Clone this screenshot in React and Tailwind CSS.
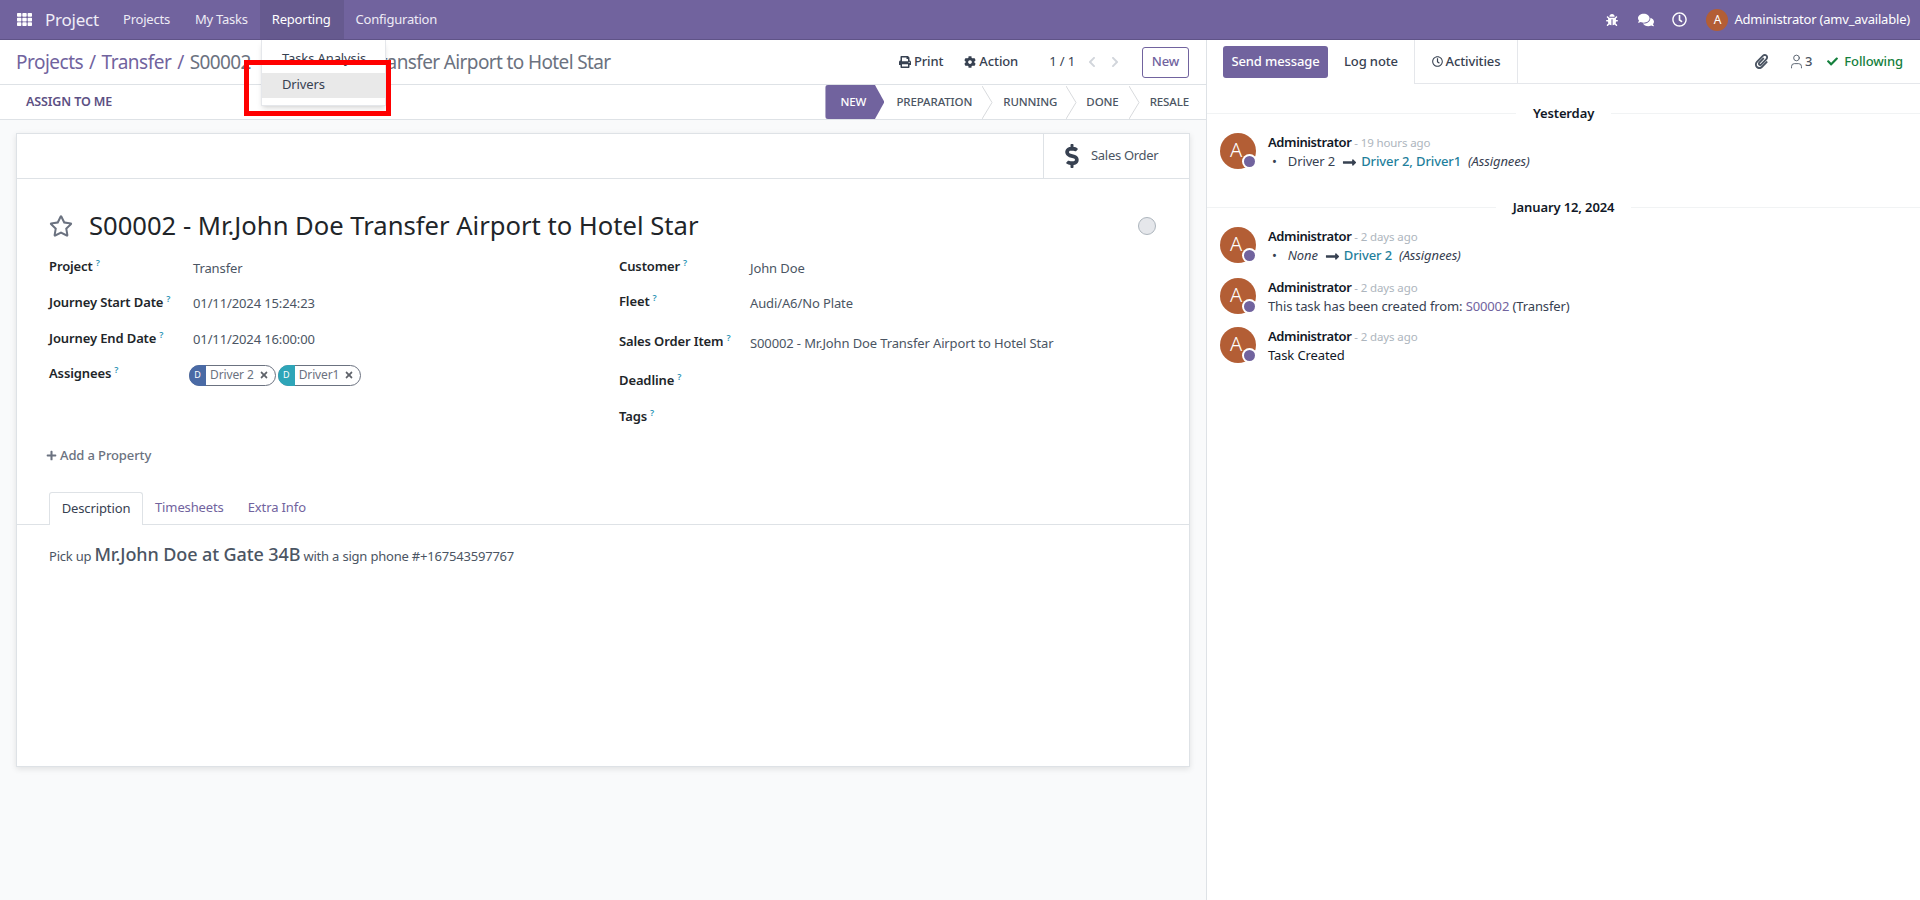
import {
  FaBug,
  FaCheck,
  FaChevronLeft,
  FaChevronRight,
  FaCog,
  FaComments,
  FaDollarSign,
  FaLongArrowAltRight,
  FaPaperclip,
  FaPlus,
  FaPrint,
  FaRegClock,
  FaRegStar,
  FaTh,
  FaTimes,
} from "react-icons/fa";
import { User } from "lucide-react";

const Help = () => (
  <sup className="ml-[3px] text-[9px] font-semibold text-[#2a93b5] -top-[5px]">?</sup>
);

const Field = ({ label, value, height, valueWidth, children }) => (
  <div className={`flex items-center ${height}`}>
    <div className={`${valueWidth} shrink-0 font-semibold text-[#212529] -mt-[3px]`}>
      {label}
      <Help />
    </div>
    <div className="text-[#4b5563]">{value}{children}</div>
  </div>
);

const Chip = ({ name, color }) => (
  <span className="flex h-[21px] items-center rounded-full border border-[#6b7280] pr-[6px] text-[12px] text-[#6b7280]">
    <span className={`${color} -ml-px mr-[4px] flex h-[21px] w-[17px] items-center justify-center rounded-l-full text-[9px] text-white`}>
      D
    </span>
    {name}
    <FaTimes className="ml-[5px] text-[10px] text-[#5f636a]" />
  </span>
);

const StatusArrow = () => (
  <svg width="11" height="33" viewBox="0 0 11 33" className="shrink-0 text-[#d8dadd]">
    <path d="M0 0 L10 16.5 L0 33" fill="none" stroke="currentColor" />
  </svg>
);

const Avatar = () => (
  <div className="relative flex size-[36px] shrink-0 items-center justify-center rounded-full bg-[#b35e35] text-[20px] font-light text-white">
    <span className="-mt-[2px] -ml-[4px]">A</span>
    <span className="absolute -right-[1px] bottom-[0px] flex size-[15px] items-center justify-center rounded-full bg-white">
      <span className="size-[11px] rounded-full bg-[#71639e]" />
    </span>
  </div>
);

const Message = ({ ago, className, children }) => (
  <div className={`flex gap-[12px] pl-[13px] ${className}`}>
    <Avatar />
    <div className="leading-[19px]">
      <div>
        <span className="font-semibold tracking-[-0.4px] text-[#111827]">Administrator</span>
        <span className="text-[11.5px] text-[#adb5bd]"> - {ago}</span>
      </div>
      <div>{children}</div>
    </div>
  </div>
);

const DateLine = ({ label, className }) => (
  <div className={`flex items-center gap-[17px] ${className}`}>
    <div className="h-px flex-1 bg-[#f1f3f4]" />
    <span className="font-semibold text-[#111827]">{label}</span>
    <div className="h-px flex-1 bg-[#f1f3f4]" />
  </div>
);

const App = () => {
  return (
    <div className="relative h-screen overflow-hidden bg-white text-[13px] tracking-[-0.12px] text-[#374151] font-['Noto_Sans',sans-serif]">
      {/* Navbar */}
      <header className="flex h-[40px] items-center justify-between border-b border-[#5f5387] bg-[#71639e] text-white">
        <div className="flex h-full items-center tracking-[-0.22px]">
          <FaTh className="ml-[17px] mr-[13px] text-[15px]" />
          <span className="mr-[13px] text-[17px] text-[#f0edf7]">Project</span>
          <span className="pl-[11px] pr-[13px] text-[#eeebf5]">Projects</span>
          <span className="px-[12px] text-[#eeebf5]">My Tasks</span>
          <span className="flex h-full items-center bg-[#665a8f] pl-[12px] pr-[13px]">Reporting</span>
          <span className="px-[12px] text-[#eeebf5]">Configuration</span>
        </div>
        <div className="flex h-full items-center pr-[10px]">
          <FaBug className="mr-[20px] text-[12px]" />
          <FaComments className="mr-[18px] text-[16px]" />
          <FaRegClock className="mr-[19px] text-[15px]" />
          <span className="mr-[6px] flex size-[22px] items-center justify-center rounded-full bg-[#b35e35] text-[12px]">A</span>
          <span className="tracking-[-0.2px]">Administrator (amv_available)</span>
        </div>
      </header>

      <div className="flex h-[860px]">
        {/* Main column */}
        <main className="w-[1206px] shrink-0 bg-[#f9fafb]">
          <div className="bg-white">
            <div className="flex h-[45px] items-center justify-between border-b border-[#dee2e6] pl-[16px] pr-[17px]">
              <div className="text-[19px] tracking-[-0.5px]">
                <span className="text-[#71639e]">Projects<span className="mx-[1.5px]"> / </span>Transfer<span className="mx-[1.5px]"> / </span></span>
                <span className="tracking-[-0.62px] text-[#6b7280]">S00002 - Mr.John Doe Transfer Airport to Hotel Star</span>
              </div>
              <div className="flex items-center">
                <span className="flex items-center gap-[3px] font-medium text-[#374151]"><FaPrint className="text-[12px]" /> Print</span>
                <span className="ml-[21px] flex items-center gap-[3px] font-medium text-[#374151]"><FaCog className="text-[12px]" /> Action</span>
                <span className="ml-[31px] text-[#374151]">1 / 1</span>
                <FaChevronLeft className="ml-[11px] text-[12px] text-[#d1d5db]" />
                <FaChevronRight className="ml-[11px] text-[12px] text-[#d1d5db]" />
                <span className="ml-[21px] flex h-[31px] w-[47px] items-center justify-center rounded-[3px] border border-[#71639e] font-medium text-[#71639e]">New</span>
              </div>
            </div>
            <div className="flex h-[35px] items-center justify-between border-b border-[#dee2e6] pl-[26px] pr-[17px]">
              <span className="pt-px text-[12.5px] font-semibold text-[#5c5083]">ASSIGN TO ME</span>
              <div className="flex h-full items-center text-[11.5px] font-medium text-[#4b5563]">
                <span className="flex h-full w-[59px] items-center rounded-l-[3px] bg-[#71639e] pl-[15px] text-white [clip-path:polygon(0_0,84%_0,100%_50%,84%_100%,0_100%)]">NEW</span>
                <span className="ml-[12px] mr-[10px]">PREPARATION</span>
                <StatusArrow />
                <span className="ml-[10px] mr-[9px]">RUNNING</span>
                <StatusArrow />
                <span className="ml-[9px] mr-[10px]">DONE</span>
                <StatusArrow />
                <span className="ml-[10px]">RESALE</span>
              </div>
            </div>
          </div>

          {/* Form sheet */}
          <div className="ml-[16px] mt-[13px] h-[634px] w-[1174px] border border-[#dee2e6] bg-white shadow-[0_2px_6px_rgba(0,0,0,0.1)]">
            <div className="flex h-[45px] justify-end border-b border-[#dee2e6]">
              <div className="flex w-[146px] items-center gap-[7px] border-l border-[#dee2e6] pl-[16px] tracking-[-0.3px] text-[#4b5563]">
                <FaDollarSign className="text-[24px] text-[#374151]" />
                <span>Sales Order</span>
              </div>
            </div>

            <div className="flex h-[72px] items-center justify-between pl-[32px] pr-[33px] pt-[22px]">
              <div className="flex items-center">
                <FaRegStar className="text-[24px] text-[#6b7280]" />
                <h1 className="ml-[16px] text-[25.6px] tracking-normal text-[#212529]">S00002 - Mr.John Doe Transfer Airport to Hotel Star</h1>
              </div>
              <span className="size-[18px] rounded-full border border-[#adb5bd] bg-[#e5e7eb]" />
            </div>

            <div className="flex pl-[32px]">
              <div className="w-[570px]">
                <Field label="Project" value="Transfer" height="h-[35px]" valueWidth="w-[144px]" />
                <Field label="Journey Start Date" value="01/11/2024 15:24:23" height="h-[36px]" valueWidth="w-[144px]" />
                <Field label="Journey End Date" value="01/11/2024 16:00:00" height="h-[36px]" valueWidth="w-[144px]" />
                <Field label="Assignees" height="h-[35px]" valueWidth="w-[140px]">
                  <div className="-mt-px flex gap-[2px]">
                    <Chip name="Driver 2" color="bg-[#4a6aa5]" />
                    <Chip name="Driver1" color="bg-[#2ea5b8]" />
                  </div>
                </Field>
              </div>
              <div>
                <Field label="Customer" value="John Doe" height="h-[35px]" valueWidth="w-[131px]" />
                <Field label="Fleet" value="Audi/A6/No Plate" height="h-[35px]" valueWidth="w-[131px]" />
                <Field label="Sales Order Item" value="S00002 - Mr.John Doe Transfer Airport to Hotel Star" height="h-[45px]" valueWidth="w-[131px]" />
                <Field label="Deadline" height="h-[33px]" valueWidth="w-[131px]" />
                <Field label="Tags" height="h-[38px]" valueWidth="w-[131px]" />
              </div>
            </div>

            <div className="ml-[29px] mt-[9px] flex items-center gap-[3px] font-medium text-[#6b7280]">
              <FaPlus className="text-[11px]" /> Add a Property
            </div>

            <div className="mt-[26px] flex h-[33px] items-end border-b border-[#dee2e6] pl-[32px]">
              <span className="-mb-px flex h-[33px] w-[94px] items-center justify-center rounded-t-[3px] border border-b-0 border-[#dee2e6] bg-white text-[#374151]">Description</span>
              <span className="flex h-[33px] items-center px-[12px] pt-[2px] text-[#71639e]">Timesheets</span>
              <span className="flex h-[33px] items-center px-[12px] pt-[2px] text-[#71639e]">Extra Info</span>
            </div>

            <div className="flex items-baseline gap-[3px] pl-[32px] pt-[16px] tracking-[-0.2px] text-[#4b5563]">
              Pick up <span className="text-[18px] font-medium tracking-[-0.1px]">Mr.John Doe at Gate 34B</span> with a sign phone #+167543597767
            </div>
          </div>
        </main>

        {/* Chatter */}
        <aside className="flex-1 border-l border-[#dee2e6] bg-white">
          <div className="flex h-[44px]">
            <div className="flex items-center pl-[16px]">
              <span className="flex h-[32px] w-[105px] items-center justify-center rounded-[3px] bg-[#71639e] font-medium text-white">Send message</span>
              <span className="w-[86px] pl-[16px] font-medium text-[#374151]">Log note</span>
            </div>
            <span className="flex w-[104px] items-center justify-center gap-[3px] border-x border-b border-[#e5e7eb] font-medium text-[#374151]">
              <FaRegClock className="text-[11px]" /> Activities
            </span>
            <div className="flex flex-1 items-center justify-end border-b border-[#e5e7eb] pr-[17px] font-medium">
              <FaPaperclip className="text-[15px] text-[#4b5563]" />
              <User size={17} strokeWidth={1.25} className="ml-[19px] text-[#4b5563]" />
              <span className="text-[#4b5563]">3</span>
              <FaCheck className="ml-[15px] text-[11px] text-[#15803d]" />
              <span className="ml-[6px] text-[#15803d]">Following</span>
            </div>
          </div>

          <DateLine label="Yesterday" className="mt-[20px]" />
          <Message ago="19 hours ago" className="mt-[9px]">
            <span className="ml-[4px] mr-[11px]">•</span>Driver 2
            <FaLongArrowAltRight className="ml-[7px] mr-[4px] inline text-[15px]" />
            <span className="font-medium text-[#1f7f9c]">Driver 2, Driver1</span>
            <i className="ml-[7px]">(Assignees)</i>
          </Message>

          <DateLine label="January 12, 2024" className="mt-[27px]" />
          <Message ago="2 days ago" className="mt-[10px]">
            <span className="ml-[4px] mr-[11px]">•</span><i>None</i>
            <FaLongArrowAltRight className="ml-[7px] mr-[4px] inline text-[15px]" />
            <span className="font-medium text-[#1f7f9c]">Driver 2</span>
            <i className="ml-[7px]">(Assignees)</i>
          </Message>
          <Message ago="2 days ago" className="mt-[13px]">
            This task has been created from: <span className="text-[#71639e]">S00002</span> (Transfer)
          </Message>
          <Message ago="2 days ago" className="mt-[11px]">
            <span className="text-[#111827]">Task Created</span>
          </Message>
        </aside>
      </div>

      {/* Reporting dropdown */}
      <div className="absolute left-[261px] top-[40px] h-[66px] w-[125px] border border-t-0 border-[#e5e7eb] bg-white pt-[9px] shadow-md">
        <div className="pl-[20px] text-[#374151]">Tasks Analysis</div>
        <div className="mt-[4px] flex h-[25px] items-center bg-[#e9e9e9] pl-[20px] text-[#374151]">Drivers</div>
      </div>

      {/* Red highlight drawn over the screenshot */}
      <div className="absolute left-[244px] top-[60px] h-[56px] w-[147px] border-[5px] border-[#ff0000]" />
    </div>
  );
};

export default App;
